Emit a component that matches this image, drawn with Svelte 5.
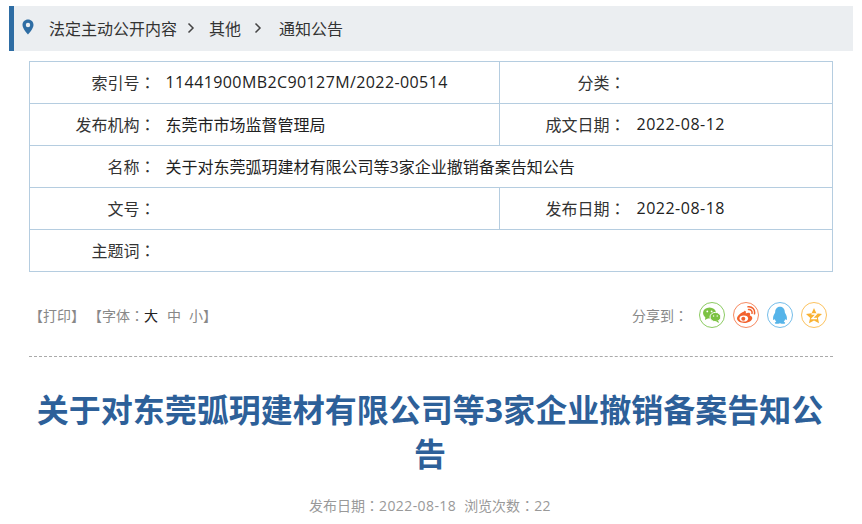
<script>
  const rows = [
    [{ l: '索引号', v: '11441900MB2C90127M/2022-00514', n: true }, { l: '分类', v: '' }],
    [{ l: '发布机构', v: '东莞市市场监督管理局' }, { l: '成文日期', v: '2022-08-12', n: true }],
    [{ l: '名称', v: '关于对东莞弧玥建材有限公司等3家企业撤销备案告知公告' }],
    [{ l: '文号', v: '' }, { l: '发布日期', v: '2022-08-18', n: true }],
    [{ l: '主题词', v: '' }]
  ];
</script>

<div class="page">
  <nav class="crumb">
    <svg class="pin" width="12" height="16" viewBox="0 0 12 16"><path fill="#2e6da4" fill-rule="evenodd" d="M6 0.5C2.8 0.5 0.5 2.9 0.5 5.9 0.5 9.6 6 15.5 6 15.5S11.5 9.6 11.5 5.9C11.5 2.9 9.2 0.5 6 0.5ZM6 3.8A2.2 2.2 0 1 1 6 8.2 2.2 2.2 0 0 1 6 3.800Z"/></svg>
    <span>法定主动公开内容</span>
    <svg class="chev" width="8" height="12" viewBox="0 0 8 12"><path d="M1.5 1.5 6 6 1.500 10.500" fill="none" stroke="#444" stroke-width="1.5"/></svg>
    <span>其他</span>
    <svg class="chev second" width="8" height="12" viewBox="0 0 8 12"><path d="M1.5 1.5 6 6 1.500 10.500" fill="none" stroke="#444" stroke-width="1.5"/></svg>
    <span>通知公告</span>
  </nav>

  <table class="info">
    <colgroup><col class="a" /><col class="b" /><col class="c" /><col /></colgroup>
    <tbody>
      {#each rows as r}
        <tr>
          <td class="lab">{r[0].l}<span class="co">：</span></td>
          {#if r.length === 1}
            <td class="val" colspan="3">{r[0].v}</td>
          {:else}
            <td class="val bar" class:num={r[0].n}>{r[0].v}</td>
            <td class="lab">{r[1].l}<span class="co">：</span></td>
            <td class="val last" class:num={r[1].n}>{r[1].v}</td>
          {/if}
        </tr>
      {/each}
    </tbody>
  </table>

  <div class="tools">
    <div class="left">
      <span>【打印】</span>
      <span class="font">【字体<span class="co">：</span><b>大</b><i>中</i><i>小</i>】</span>
    </div>
    <div class="share">
      <span class="sl">分享到<span class="co">：</span></span>
      <span class="ic" style="border-color:#8ccb62">
        <svg width="20" height="18" viewBox="0 0 20 18"><ellipse cx="7.5" cy="7" rx="6.5" ry="5.6" fill="#7cc243"/><path d="M3.5 10.5 3 14l3.5-2z" fill="#7cc243"/><ellipse cx="13.4" cy="11" rx="5.4" ry="4.6" fill="#7cc243" stroke="#fff" stroke-width="1"/><path d="M16 14.5l1.2 2.5-3.2-1.500z" fill="#7cc243"/><circle cx="5.3" cy="5.4" r=".9" fill="#fff"/><circle cx="9.6" cy="5.4" r=".9" fill="#fff"/><circle cx="11.6" cy="10" r=".7" fill="#fff"/><circle cx="15.2" cy="10" r=".7" fill="#fff"/></svg>
      </span>
      <span class="ic" style="border-color:#f78a61">
        <svg width="20" height="18" viewBox="0 0 20 18"><path d="M8.2 5.5C4.8 6.7 1 10 1 12.6 1 15.300 4.600 17 8.300 17c4.500 0 8-2.500 8-5 0-1.700-1.700-2.300-2.500-2.500.6-1.300.4-2.300-.5-2.700-1.100-.4-2.600.1-3.500.6.400-1.500-.2-3-1.600-2.400z" fill="#f2622e"/><ellipse cx="7.800" cy="12.500" rx="4.300" ry="3.100" fill="#fff"/><circle cx="7.300" cy="12.800" r="2" fill="#f2622e"/><path d="M12.500 3.500c2.300-.3 4 1.500 3.500 3.800M12 .8c4.300-.5 7.300 3 6.500 7" fill="none" stroke="#f2622e" stroke-width="1.500" stroke-linecap="round"/></svg>
      </span>
      <span class="ic" style="border-color:#74bdea">
        <svg width="16" height="19" viewBox="0 0 16 19"><path d="M8 .8c3.300 0 4.800 2.600 4.800 5.200 0 .7.200 1 .7 1.800 1 1.700 1.800 3.700 1.300 5.700-.3 1-1 .5-1.600-.6-.2 1.200-.7 2.100-1.500 2.800 1.100.4 1.700 1 1.400 1.500-.4.600-2.800.7-4.500.2-.4-.1-.8-.1-1.200 0-1.700.5-4.100.4-4.500-.2-.3-.5.300-1.100 1.400-1.500-.8-.7-1.300-1.600-1.500-2.800-.6 1.100-1.300 1.600-1.600.6-.5-2 .3-4 1.300-5.700.5-.8.700-1.100.7-1.800C3.200 3.400 4.700.8 8 .8z" fill="#56b4e9"/></svg>
      </span>
      <span class="ic" style="border-color:#fcc25e">
        <svg width="18" height="17" viewBox="0 0 18 17"><path d="M9 1l2.400 5.200 5.600.7-4.100 3.800 1.100 5.600L9 13.500l-5 2.800 1.100-5.600L1 6.900l5.600-.7z" fill="#f9b233"/><path d="M6.500 7h5l-4.500 4.500h5" fill="none" stroke="#fff" stroke-width="1.300"/></svg>
      </span>
    </div>
  </div>

  <div class="rule"></div>

  <h1>关于对东莞弧玥建材有限公司等3家企业撤销备案告知公告</h1>
  <div class="meta"><span>发布日期<span class="co">：</span><span class="num">2022-08-18</span></span><span>浏览次数<span class="co">：</span><span class="num">22</span></span></div>
</div>

<style>
  :global(body) {
    margin: 0;
    background: #fff;
  }
  .page {
    width: 862px;
    height: 524px;
    overflow: hidden;
    box-sizing: border-box;
    padding-top: 6px;
    font-family: "Open Sans", "Noto Sans CJK SC", sans-serif;
    font-size: 16px;
    color: #333;
  }
  .co { font-family: "Noto Sans CJK TC", sans-serif; }
  .num { letter-spacing: 0.4px; }
  .crumb {
    box-sizing: border-box;
    width: 844px;
    height: 45px;
    margin-left: 9px;
    border-left: 5px solid #2e6da4;
    background: #ebeef1;
    display: flex;
    align-items: center;
    padding: 0 0 2px 8px;
    color: #333;
  }
  .crumb .pin { margin-right: 15px; margin-top: -2px; }
  .crumb .chev { margin: 0 14px 0 10px; }
  .crumb .chev.second { margin: 0 17px 0 13px; }
  .info {
    width: 804px;
    margin: 10px 0 0 29px;
    border-collapse: collapse;
    table-layout: fixed;
    color: #222;
  }
  col.a { width: 126px; }
  col.b { width: 344px; }
  col.c { width: 126px; }
  .info td {
    height: 42px;
    padding: 0 0 2px;
    border: 1px solid #b5cde0;
    box-sizing: border-box;
  }
  .info td.lab { border-right: none; text-align: right; color: #333; }
  .info td.val { border-left: none; padding-left: 10px; }
  .info td.val.last { padding-left: 11px; letter-spacing: 0.5px; }
  .info td.val.bar { border-right: 1px solid #b5cde0; }
  .tools {
    box-sizing: border-box;
    width: 804px;
    margin: 28px 0 0 29px;
    height: 30px;
    padding-right: 6px;
    display: flex;
    justify-content: space-between;
    align-items: center;
    font-size: 14px;
    color: #888;
  }
  .left { display: flex; gap: 3px; }
  .font b { font-weight: 400; color: #222; margin-right: 9px; }
  .font i { font-style: normal; margin-right: 8px; }
  .font i:last-of-type { margin-right: 0; }
  .share { display: flex; align-items: center; }
  .sl { margin-right: 3px; }
  .ic {
    box-sizing: border-box;
    width: 26px;
    height: 26px;
    border: 1px solid;
    border-radius: 50%;
    display: flex;
    align-items: center;
    justify-content: center;
    margin-left: 8px;
  }
  .ic svg { display: block; }
  .rule {
    width: 804px;
    margin: 26px 0 0 29px;
    border-top: 1px dashed #aaa;
  }
  h1 {
    width: 804px;
    margin: 31px 0 0 28px;
    text-align: center;
    font-size: 32px;
    line-height: 44px;
    font-weight: 700;
    color: #2d6099;
  }
  .meta {
    margin-top: 19px;
    margin-right: 2px;
    display: flex;
    justify-content: center;
    gap: 8px;
    font-size: 14px;
    color: #999;
  }
</style>
